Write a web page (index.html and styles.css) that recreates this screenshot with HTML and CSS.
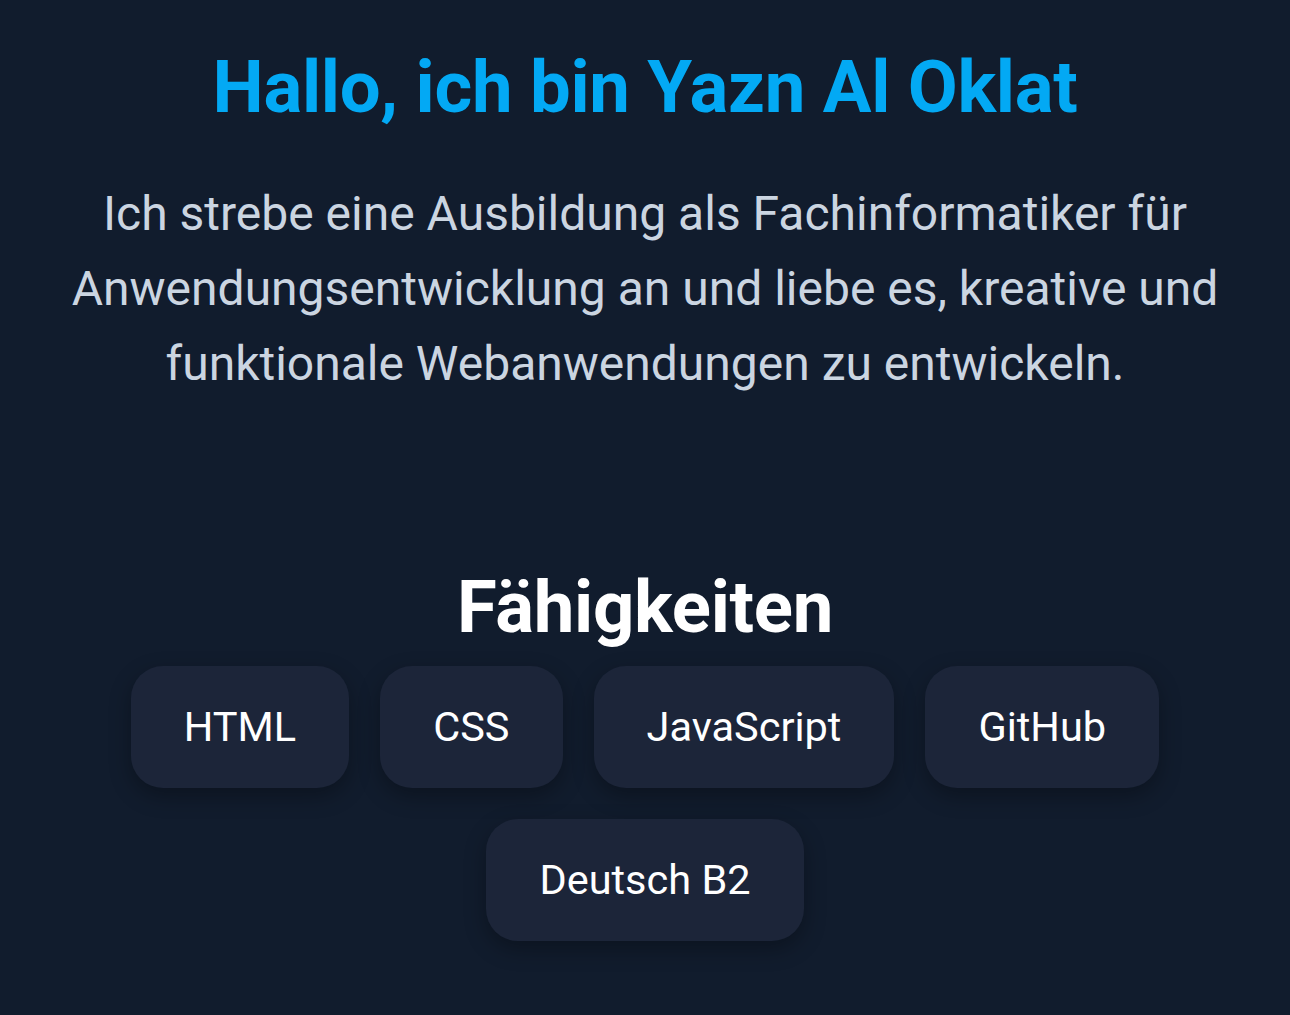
FILE: index.html
```html
<!DOCTYPE html>
<html lang="de">
<head>
<meta charset="utf-8">
<title>Yazn Al Oklat</title>
<link rel="stylesheet" href="styles.css">
</head>
<body>
<main class="page">
  <section class="hero">
    <h1 class="hero-title">Hallo, ich bin Yazn Al Oklat</h1>
    <p class="hero-text">Ich strebe eine Ausbildung als Fachinformatiker für Anwendungsentwicklung an und liebe es, kreative und funktionale Webanwendungen zu entwickeln.</p>
  </section>
  <section class="skills">
    <h2 class="skills-title">Fähigkeiten</h2>
    <div class="skill-list">
      <span class="skill">HTML</span>
      <span class="skill">CSS</span>
      <span class="skill">JavaScript</span>
      <span class="skill">GitHub</span>
      <span class="skill">Deutsch B2</span>
    </div>
  </section>
</main>
</body>
</html>
```
FILE: styles.css
```css
html, body {
  margin: 0;
  padding: 0;
}
body {
  background: #111c2d;
  font-family: Roboto, "Noto Sans", sans-serif;
  color: #ffffff;
  min-height: 1015px;
}
.page {
  text-align: center;
  padding: 44px 20px 0;
}
.hero-title {
  margin: 0;
  font-size: 72.5px;
  line-height: 88px;
  font-weight: 700;
  letter-spacing: -0.3px;
  color: #03a9f4;
}
.hero-text {
  margin: 44px auto 0;
  max-width: 1240px;
  font-size: 48px;
  line-height: 75px;
  font-weight: 400;
  color: #cbd5e1;
}
.skills {
  margin-top: 163px;
}
.skills-title {
  margin: 0;
  font-size: 72.5px;
  line-height: 88px;
  font-weight: 700;
  letter-spacing: -0.3px;
  color: #ffffff;
}
.skill-list {
  margin-top: 14px;
  display: flex;
  flex-wrap: wrap;
  justify-content: center;
  gap: 31px;
}
.skill {
  background: #1c2539;
  color: #ffffff;
  font-size: 41.5px;
  line-height: 50px;
  padding: 36px 53px;
  border-radius: 32px;
  box-shadow: 0 8px 22px rgba(0, 0, 0, 0.3);
}
```
